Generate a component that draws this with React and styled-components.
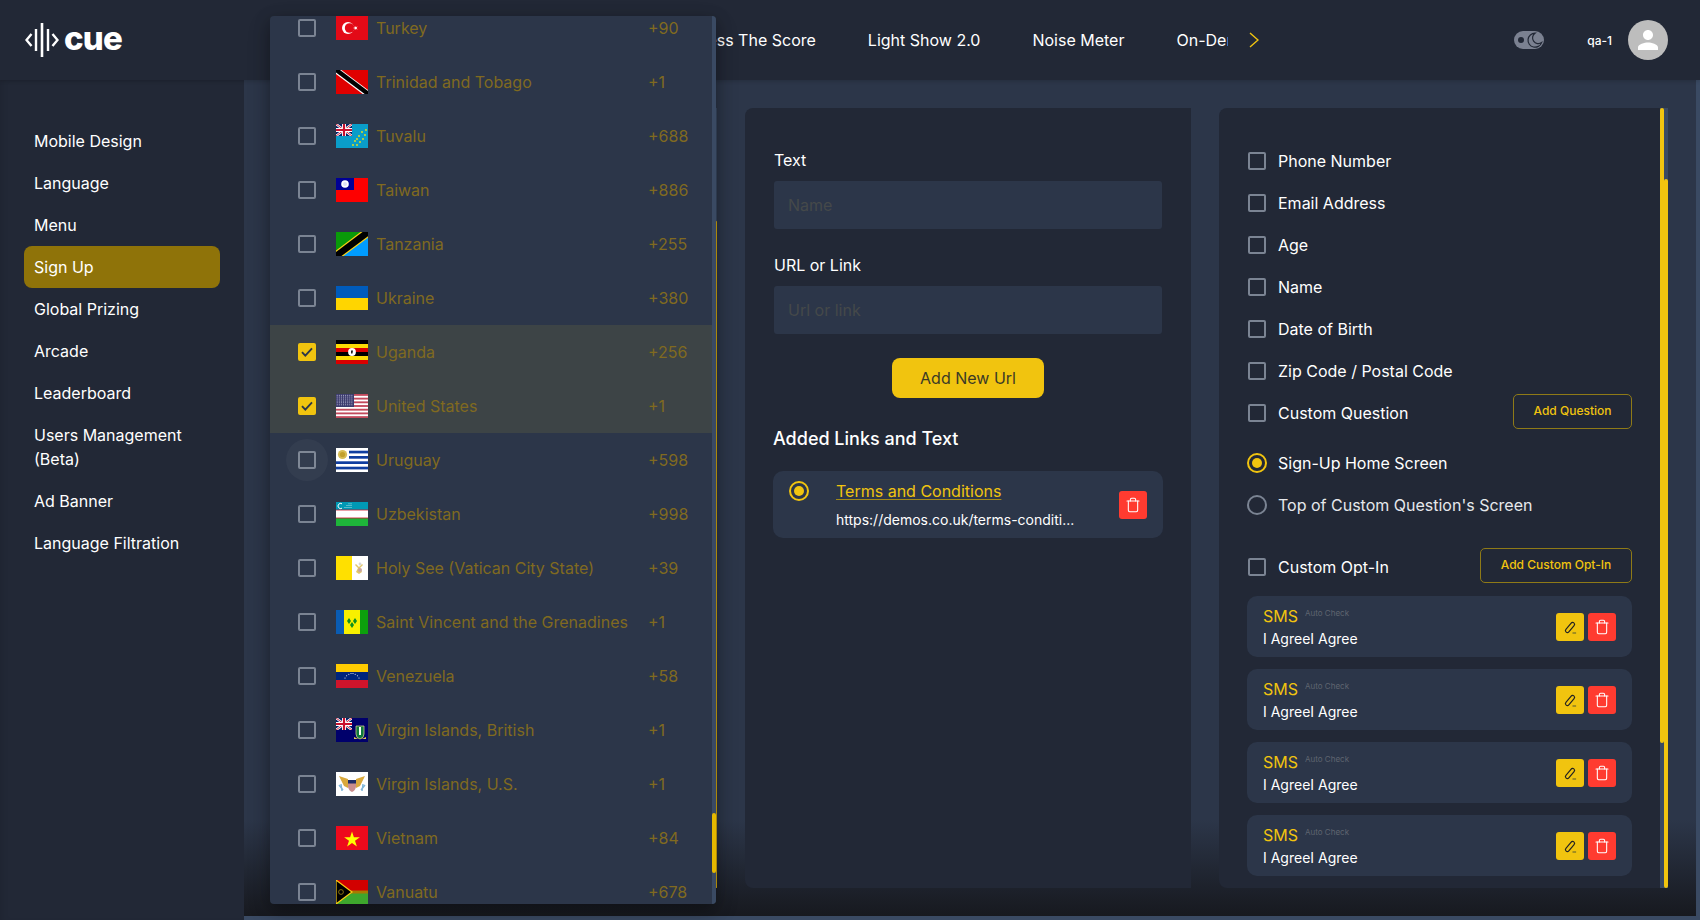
import React from "react";
import styled, { createGlobalStyle } from "styled-components";
import { Trash } from "lucide-react";

const GlobalStyle = createGlobalStyle`
  html, body {
    margin: 0;
    padding: 0;
    background: #222836;
    overflow: hidden;
  }
  * {
    box-sizing: border-box;
  }
`;

const GOLD = "#f1c40f";
const DARK = "#222836";
const SLATE = "#2c3649";
const TRACK = "#3a4a63";

const Page = styled.div`
  width: 1700px;
  height: 920px;
  position: relative;
  display: flex;
  flex-direction: column;
  font-family: Inter, "Noto Sans", sans-serif;
  color: #fff;
  overflow: hidden;
`;

/* top bar */
const TopBar = styled.header`
  height: 80px;
  flex: none;
  display: flex;
  align-items: center;
  background: ${DARK};
  box-shadow: 0 1px 4px rgba(0, 0, 0, 0.18);
  position: relative;
  z-index: 1;
`;

const Brand = styled.div`
  width: 686px;
  flex: none;
  padding-left: 25px;
  display: flex;
  align-items: center;
  gap: 5px;
`;

const BrandName = styled.span`
  font-size: 33px;
  font-weight: 800;
  letter-spacing: -0.8px;
  line-height: 40px;
  margin-top: -4px;
`;

const NavViewport = styled.nav`
  width: 542px;
  flex: none;
  display: flex;
  gap: 52px;
  overflow: hidden;
  white-space: nowrap;
`;

const NavLink = styled.span`
  font-size: 16px;
  line-height: 24px;
  flex: none;
`;

const NavNext = styled.svg`
  width: 10px;
  height: 16px;
  margin-left: 21px;
  flex: none;
`;

const TopRight = styled.div`
  margin-left: auto;
  padding-right: 32px;
  display: flex;
  align-items: center;
`;

const ThemeSwitch = styled.svg`
  width: 30px;
  height: 18px;
  margin-right: 43px;
`;

const UserName = styled.span`
  font-size: 12px;
  font-weight: 500;
  margin-right: 16px;
`;

const Avatar = styled.div`
  width: 40px;
  height: 40px;
  border-radius: 50%;
  background: #bdbdbd;
  display: flex;
  align-items: center;
  justify-content: center;
`;

/* body */
const Body = styled.div`
  flex: 1;
  display: flex;
  min-height: 0;
`;

const Sidebar = styled.aside`
  width: 244px;
  flex: none;
  background: ${DARK};
  padding: 40px 24px 0;
  display: flex;
  flex-direction: column;
  box-shadow: inset 6px 0 8px -6px rgba(0, 0, 0, 0.15);
`;

const SideItem = styled.div`
  width: 196px;
  padding: 9px 10px;
  font-size: 16px;
  line-height: 24px;
  border-radius: 8px;
  background: ${(p) => (p.$active ? "#8f7309" : "transparent")};
`;

const Main = styled.main`
  flex: 1;
  display: grid;
  grid-template-columns: 447px 446px 449px;
  gap: 28px;
  padding: 28px 0 28px 26px;
  border-right: 4px solid ${TRACK};
  border-bottom: 4px solid ${TRACK};
  background: linear-gradient(to bottom, ${SLATE} 0, ${SLATE} 740px, #17191f 836px);
`;

const Panel = styled.section`
  background: ${DARK};
  border-radius: 8px 0 0 8px;
  display: flex;
  min-height: 0;
`;

const PanelBody = styled.div`
  flex: 1;
  min-width: 0;
  padding: ${(p) => p.$padding};
`;

const ScrollTrack = styled.div`
  width: ${(p) => p.$width || 4}px;
  flex: none;
  background: ${TRACK};
`;

const ScrollThumb = styled.div`
  height: ${(p) => p.$height}px;
  margin-top: ${(p) => p.$top || 0}px;
  background: ${(p) => p.$color || GOLD};
  border-radius: 2px;
`;

/* country dropdown */
const CountryMenu = styled.div`
  position: absolute;
  left: 270px;
  top: 16px;
  width: 446px;
  height: 888px;
  display: flex;
  background: ${SLATE};
  border-radius: 4px;
  overflow: hidden;
  z-index: 2;
  box-shadow: 0 5px 16px rgba(0, 0, 0, 0.3), 0 8px 24px rgba(0, 0, 0, 0.16);
`;

const CountryList = styled.div`
  flex: 1;
  margin-top: -15px;
`;

const CountryRow = styled.div`
  height: 54px;
  display: flex;
  align-items: center;
  padding-left: 28px;
  background: ${(p) => (p.$selected ? "#3d4446" : "transparent")};
`;

const Check = styled.span`
  width: 18px;
  height: 18px;
  flex: none;
  position: relative;
  display: flex;
  align-items: center;
  justify-content: center;
  border-radius: 2px;
  border: ${(p) => (p.$checked ? "none" : "2px solid #7b8493")};
  background: ${(p) => (p.$checked ? GOLD : "transparent")};

  &::before {
    content: "";
    display: ${(p) => (p.$hover ? "block" : "none")};
    position: absolute;
    left: -14px;
    top: -14px;
    width: 42px;
    height: 42px;
    border-radius: 50%;
    background: rgba(255, 255, 255, 0.035);
  }
`;

const FlagSvg = styled.svg`
  width: 32px;
  height: 24px;
  flex: none;
  margin-left: 20px;
  display: block;
`;

const CountryName = styled.span`
  width: 272px;
  flex: none;
  margin-left: 8px;
  font-size: 16px;
  line-height: 24px;
  color: #806a20;
  white-space: nowrap;
`;

const CountryCode = styled.span`
  font-size: 16px;
  line-height: 24px;
  color: #806a20;
`;

/* link form */
const FieldLabel = styled.div`
  font-size: 16px;
  line-height: 24px;
  margin-top: ${(p) => p.$top || 0}px;
`;

const TextInput = styled.input`
  display: block;
  width: 388px;
  height: 48px;
  margin-top: 9px;
  padding: 0 14px;
  border: none;
  border-radius: 3px;
  outline: none;
  background: ${SLATE};
  color: #fff;
  font-family: inherit;
  font-size: 16px;

  &::placeholder {
    color: #45494a;
    opacity: 1;
  }
`;

const AddButton = styled.button`
  display: block;
  width: 152px;
  height: 40px;
  margin: 24px auto 0;
  border: none;
  border-radius: 8px;
  background: ${GOLD};
  color: #3b3a26;
  font-family: inherit;
  font-size: 16px;
`;

const SectionTitle = styled.h3`
  margin: 27px 0 18px -1px;
  font-size: 18px;
  font-weight: 500;
  line-height: 28px;
`;

const LinkCard = styled.div`
  width: 390px;
  height: 67px;
  margin-left: -1px;
  padding: 8px 16px;
  display: flex;
  align-items: flex-start;
  border-radius: 10px;
  background: ${SLATE};
`;

const Radio = styled.span`
  width: 20px;
  height: 20px;
  flex: none;
  display: flex;
  align-items: center;
  justify-content: center;
  border-radius: 50%;
  border: 2px solid ${(p) => (p.$on ? GOLD : "#7b8493")};
  margin-top: ${(p) => p.$top || 0}px;

  &::after {
    content: "";
    display: ${(p) => (p.$on ? "block" : "none")};
    width: 10px;
    height: 10px;
    border-radius: 50%;
    background: ${GOLD};
  }
`;

const LinkText = styled.div`
  margin-left: 27px;
  flex: 1;
  min-width: 0;
`;

const LinkTitle = styled.div`
  font-size: 16px;
  line-height: 24px;
  color: ${GOLD};
  text-decoration: underline;
  text-underline-offset: 2px;
  text-decoration-thickness: 1px;
  text-decoration-color: #a38a17;
`;

const LinkUrl = styled.div`
  margin-top: 7px;
  font-size: 14px;
  line-height: 20px;
`;

const IconButton = styled.button`
  width: 28px;
  height: 28px;
  flex: none;
  padding: 0;
  border: none;
  border-radius: 3px;
  display: flex;
  align-items: center;
  justify-content: center;
  background: ${(p) => (p.$kind === "edit" ? GOLD : "#ff3b30")};
  color: ${(p) => (p.$kind === "edit" ? "#222" : "#fff")};
  margin-top: ${(p) => p.$top || 0}px;
`;

/* sign-up fields */
const OptionRow = styled.div`
  height: 42px;
  display: flex;
  align-items: center;
  gap: 12px;
  margin-top: ${(p) => p.$top || 0}px;
`;

const RadioRow = styled(OptionRow)`
  gap: 11px;
  margin-left: -1px;
`;

const OptionLabel = styled.span`
  font-size: 16px;
  line-height: 24px;
  color: ${(p) => p.$color || "#fff"};
`;

const OutlineButton = styled.button`
  margin-left: auto;
  margin-bottom: 3px;
  width: ${(p) => p.$width}px;
  height: 35px;
  padding: 0 0 2px;
  border: 1px solid #8f7a17;
  border-radius: 5px;
  background: transparent;
  color: ${GOLD};
  font-family: inherit;
  font-size: 12px;
  font-weight: 500;
`;

const OptInCard = styled.div`
  height: 61px;
  margin: ${(p) => p.$top}px 0 0 -1px;
  padding: 8px 16px;
  display: flex;
  align-items: center;
  border-radius: 10px;
  background: ${SLATE};
`;

const OptInText = styled.div`
  flex: 1;
`;

const OptInHead = styled.div`
  display: flex;
  align-items: flex-start;
  gap: 7px;
`;

const OptInTitle = styled.span`
  font-size: 16px;
  line-height: 24px;
  color: ${GOLD};
`;

const AutoCheck = styled.span`
  font-size: 8px;
  line-height: 10px;
  margin-top: 4px;
  color: #5f6570;
`;

const OptInBody = styled.div`
  margin-top: 1px;
  font-size: 14px;
  line-height: 20px;
`;

const CardActions = styled.div`
  display: flex;
  gap: 4px;
`;

const UK = ({ w = 16, h = 12 }) => (
  <svg x="0" y="0" width={w} height={h} viewBox="0 0 16 12" preserveAspectRatio="none">
    <rect width="16" height="12" fill="#012169" />
    <path d="M0 0L16 12M16 0L0 12" stroke="#fff" strokeWidth="2.4" />
    <path d="M0 0L16 12M16 0L0 12" stroke="#c8102e" strokeWidth="0.9" />
    <path d="M8 0V12M0 6H16" stroke="#fff" strokeWidth="4" />
    <path d="M8 0V12M0 6H16" stroke="#c8102e" strokeWidth="2.2" />
  </svg>
);

const dots = (list, fill, r = 0.6) =>
  list.map(([x, y], i) => <circle key={i} cx={x} cy={y} r={r} fill={fill} />);

const usStars = [];
for (let y = 1.2; y < 12.5; y += 1.9) {
  for (let x = 1.2; x < 16.5; x += 2.1) usStars.push([x, y]);
}

const flags = {
  TR: (
    <>
      <rect width="32" height="24" fill="#e30a17" />
      <circle cx="12" cy="12" r="6" fill="#fff" />
      <circle cx="13.6" cy="12" r="4.8" fill="#e30a17" />
      <path d="M17 12l4.6-1.6-2.8 3.9v-4.6l2.8 3.9z" fill="#fff" />
    </>
  ),
  TT: (
    <>
      <rect width="32" height="24" fill="#e00000" />
      <path d="M0 0L32 24" stroke="#fff" strokeWidth="6.4" />
      <path d="M-1 -1L33 24.5" stroke="#000" strokeWidth="4.4" />
    </>
  ),
  TV: (
    <>
      <rect width="32" height="24" fill="#0a9dc9" />
      <UK />
      {dots(
        [[30, 6], [26, 8], [29, 11], [23, 12], [21, 15], [27, 15], [19, 17], [24, 18], [17, 21], [21, 21]],
        "#f5e20f",
        0.9,
      )}
    </>
  ),
  TW: (
    <>
      <rect width="32" height="24" fill="#fe0000" />
      <rect width="18" height="12" fill="#000095" />
      <circle cx="9" cy="6" r="3.8" fill="#fff" />
      <circle cx="9" cy="6" r="2" fill="#dfe0f5" />
    </>
  ),
  TZ: (
    <>
      <rect width="32" height="24" fill="#099a09" />
      <path d="M32 0V24H0z" fill="#009cff" />
      <path d="M0 24L32 0" stroke="#fcd116" strokeWidth="9" />
      <path d="M0 24L32 0" stroke="#000" strokeWidth="6.6" />
    </>
  ),
  UA: (
    <>
      <rect width="32" height="12" fill="#005bbb" />
      <rect y="12" width="32" height="12" fill="#ffd500" />
    </>
  ),
  UG: (
    <>
      {["#000", "#fcdc04", "#d90000", "#000", "#fcdc04", "#d90000"].map((c, i) => (
        <rect key={i} y={i * 4} width="32" height="4" fill={c} />
      ))}
      <circle cx="16" cy="12" r="3.9" fill="#fff" />
      <path d="M15 10.5l2 0-.5 3h-1.5z" fill="#222" />
    </>
  ),
  US: (
    <>
      <rect width="32" height="24" fill="#fff" />
      {[0, 1, 2, 3, 4, 5, 6].map((i) => (
        <rect key={i} y={(i * 24) / 6.5} width="32" height="1.85" fill="#c2495c" />
      ))}
      <rect width="18" height="13" fill="#3c3b6e" />
      {dots(usStars, "#c9cbe0", 0.5)}
    </>
  ),
  UY: (
    <>
      <rect width="32" height="24" fill="#fff" />
      {[2.7, 8, 13.3, 18.7].map((y) => (
        <rect key={y} y={y} x={y < 13 ? 13 : 0} width={y < 13 ? 19 : 32} height="2.7" fill="#0e3da0" />
      ))}
      <circle cx="6.5" cy="6.5" r="4.6" fill="#d8bd55" />
      <circle cx="6.5" cy="6.5" r="2.6" fill="#c2a02c" />
    </>
  ),
  UZ: (
    <>
      <rect width="32" height="8" fill="#0099b5" />
      <rect y="8" width="32" height="8" fill="#fff" />
      <rect y="16" width="32" height="8" fill="#1eb53a" />
      <rect y="7.6" width="32" height="0.8" fill="#ce1126" />
      <rect y="15.6" width="32" height="0.8" fill="#ce1126" />
      <path d="M6 1.8a2.6 2.6 0 1 0 0 4.4" stroke="#fff" strokeWidth="1" fill="none" />
      {dots([[9, 5.6], [11, 5.6], [13, 5.6], [15, 5.6], [11, 3.6], [13, 3.6], [15, 3.6], [13, 1.8], [15, 1.8]], "#dff3f6", 0.5)}
    </>
  ),
  VA: (
    <>
      <rect width="16" height="24" fill="#ffe000" />
      <rect x="16" width="16" height="24" fill="#fff" />
      <path d="M20 8l3 3 3-3 1 1-3 3 2 4-3 2-3-2 2-4-3-3z" fill="#e2c66a" />
      <circle cx="24" cy="14" r="2" fill="#c9a6a0" />
      <circle cx="24" cy="8" r="1.4" fill="#d7d7d7" />
    </>
  ),
  VC: (
    <>
      <rect width="8" height="24" fill="#0a5cb3" />
      <rect x="8" width="16" height="24" fill="#f8f000" />
      <rect x="24" width="8" height="24" fill="#0c9f0c" />
      <path d="M13 8l2 3-2 3-2-3zM19 8l2 3-2 3-2-3zM16 12l2 3-2 3-2-3z" fill="#0c8f1c" />
    </>
  ),
  VE: (
    <>
      <rect width="32" height="8" fill="#ffcc00" />
      <rect y="8" width="32" height="8" fill="#00247d" />
      <rect y="16" width="32" height="8" fill="#cf142b" />
      {dots([[9, 14], [10.6, 11.8], [12.8, 10.2], [15, 9.5], [17, 9.5], [19.2, 10.2], [21.4, 11.8], [23, 14]], "#fff", 0.55)}
    </>
  ),
  VG: (
    <>
      <rect width="32" height="24" fill="#00006b" />
      <UK />
      <path d="M20 8h8v8q0 4-4 5-4-1-4-5z" fill="#0f7a3c" stroke="#e6d98a" strokeWidth="0.7" />
      <rect x="23" y="9" width="2" height="8" fill="#fff" />
      <path d="M18 19q6 4 12 0v2h-12z" fill="#e6c65a" />
    </>
  ),
  VI: (
    <>
      <rect width="32" height="24" fill="#fff" />
      <path d="M3 4l9 3v9l-4-2zM29 4l-9 3v9l4-2z" fill="#d9a93c" />
      <path d="M12 8h8v7q-1 4-4 5-3-1-4-5z" fill="#c98d8d" />
      <rect x="12" y="8" width="8" height="3.5" fill="#1f2d66" />
      <path d="M3 13l4 5M5 12l1 7M29 13l-4 5M27 12l-1 7" stroke="#7fb6d8" strokeWidth="1.4" />
    </>
  ),
  VN: (
    <>
      <rect width="32" height="24" fill="#ee0a1c" />
      <path d="M16 5.6l1.9 5.7h6l-4.9 3.5 1.9 5.7-4.9-3.5-4.9 3.5 1.9-5.7-4.9-3.5h6z" fill="#ff0" />
    </>
  ),
  VU: (
    <>
      <rect width="32" height="12" fill="#d20000" />
      <rect y="12" width="32" height="12" fill="#3ea72d" />
      <rect y="10.5" width="32" height="3" fill="#a77b00" />
      <path d="M0 0L16 12L0 24z" fill="#000" stroke="#fdce12" strokeWidth="1.2" />
      <circle cx="5" cy="12" r="2.4" fill="none" stroke="#a38a17" strokeWidth="0.8" />
    </>
  ),
};

const Flag = ({ code }) => <FlagSvg viewBox="0 0 32 24">{flags[code]}</FlagSvg>;

const CheckMark = () => (
  <svg width="12" height="10" viewBox="0 0 12 10">
    <path d="M1 5.2L4.3 8.6L11 1.4" fill="none" stroke="#2c3649" strokeWidth="1.9" />
  </svg>
);

const PenIcon = () => (
  <svg width="16" height="16" viewBox="0 0 16 16" fill="none" stroke="#222" strokeWidth="1.2">
    <rect x="6.1" y="2.5" width="3.8" height="12" rx="1.9" transform="rotate(40 8 8.5)" />
    <path d="M10.5 14h3.6" stroke="#6e6a2a" />
  </svg>
);

const countries = [
  { code: "TR", name: "Turkey", dial: "+90" },
  { code: "TT", name: "Trinidad and Tobago", dial: "+1" },
  { code: "TV", name: "Tuvalu", dial: "+688" },
  { code: "TW", name: "Taiwan", dial: "+886" },
  { code: "TZ", name: "Tanzania", dial: "+255" },
  { code: "UA", name: "Ukraine", dial: "+380" },
  { code: "UG", name: "Uganda", dial: "+256", checked: true },
  { code: "US", name: "United States", dial: "+1", checked: true },
  { code: "UY", name: "Uruguay", dial: "+598", hover: true },
  { code: "UZ", name: "Uzbekistan", dial: "+998" },
  { code: "VA", name: "Holy See (Vatican City State)", dial: "+39" },
  { code: "VC", name: "Saint Vincent and the Grenadines", dial: "+1" },
  { code: "VE", name: "Venezuela", dial: "+58" },
  { code: "VG", name: "Virgin Islands, British", dial: "+1" },
  { code: "VI", name: "Virgin Islands, U.S.", dial: "+1" },
  { code: "VN", name: "Vietnam", dial: "+84" },
  { code: "VU", name: "Vanuatu", dial: "+678" },
];

const menu = [
  "Mobile Design",
  "Language",
  "Menu",
  "Sign Up",
  "Global Prizing",
  "Arcade",
  "Leaderboard",
  "Users Management (Beta)",
  "Ad Banner",
  "Language Filtration",
];

const fields = ["Phone Number", "Email Address", "Age", "Name", "Date of Birth", "Zip Code / Postal Code"];

export default function App() {
  return (
    <Page>
      <GlobalStyle />
      <TopBar>
        <Brand>
          <svg width="34" height="36" viewBox="0 0 34 36" fill="none" stroke="#fff">
            <path d="M6.5 12L1.5 18L6.5 24" strokeWidth="2.4" />
            <path d="M11 7V29" strokeWidth="2.4" />
            <path d="M17 1V35" strokeWidth="2.6" />
            <path d="M23 7V29" strokeWidth="2.4" />
            <path d="M27.5 12L32.5 18L27.5 24" strokeWidth="2.4" />
          </svg>
          <BrandName>cue</BrandName>
        </Brand>
        <NavViewport>
          <NavLink>Guess The Score</NavLink>
          <NavLink>Light Show 2.0</NavLink>
          <NavLink>Noise Meter</NavLink>
          <NavLink>On-Demand</NavLink>
        </NavViewport>
        <NavNext viewBox="0 0 10 16" fill="none" stroke={GOLD} strokeWidth="1.4">
          <path d="M1 1L9 8L1 15" />
        </NavNext>
        <TopRight>
          <ThemeSwitch viewBox="0 0 30 18">
            <rect width="30" height="18" rx="9" fill="#7b8191" />
            <circle cx="7" cy="9" r="3" fill="#222836" />
            <path
              d="M21 2.2a7 7 0 1 0 6.6 9.4a5.6 5.6 0 0 1-6.6-9.4z"
              fill="none"
              stroke="#222836"
              strokeWidth="1.2"
            />
          </ThemeSwitch>
          <UserName>qa-1</UserName>
          <Avatar>
            <svg width="30" height="30" viewBox="0 0 24 24" fill="#fff">
              <path d="M12 12c2.21 0 4-1.79 4-4s-1.79-4-4-4-4 1.79-4 4 1.79 4 4 4zm0 2c-2.67 0-8 1.34-8 4v2h16v-2c0-2.66-5.33-4-8-4z" />
            </svg>
          </Avatar>
        </TopRight>
      </TopBar>

      <Body>
        <Sidebar>
          {menu.map((item) => (
            <SideItem key={item} $active={item === "Sign Up"}>
              {item}
            </SideItem>
          ))}
        </Sidebar>

        <Main>
          <Panel>
            <PanelBody />
            <ScrollTrack $width={1}>
              <ScrollThumb $top={113} $height={667} $color="#d9ac0c" />
            </ScrollTrack>
          </Panel>

          <Panel>
            <PanelBody $padding="40px 29px 0">
              <FieldLabel>Text</FieldLabel>
              <TextInput placeholder="Name" />
              <FieldLabel $top={24}>URL or Link</FieldLabel>
              <TextInput placeholder="Url or link" />
              <AddButton>Add New Url</AddButton>
              <SectionTitle>Added Links and Text</SectionTitle>
              <LinkCard>
                <Radio $on $top={2} />
                <LinkText>
                  <LinkTitle>Terms and Conditions</LinkTitle>
                  <LinkUrl>https://demos.co.uk/terms-conditi...</LinkUrl>
                </LinkText>
                <IconButton $top={12}>
                  <Trash size={16} strokeWidth={1.6} />
                </IconButton>
              </LinkCard>
            </PanelBody>
          </Panel>

          <Panel>
            <PanelBody $padding="32px 28px 0 29px">
              {fields.map((field) => (
                <OptionRow key={field}>
                  <Check />
                  <OptionLabel>{field}</OptionLabel>
                </OptionRow>
              ))}
              <OptionRow>
                <Check />
                <OptionLabel>Custom Question</OptionLabel>
                <OutlineButton $width={119}>Add Question</OutlineButton>
              </OptionRow>
              <RadioRow $top={8}>
                <Radio $on />
                <OptionLabel>Sign-Up Home Screen</OptionLabel>
              </RadioRow>
              <RadioRow>
                <Radio />
                <OptionLabel $color="#e6e8ec">Top of Custom Question's Screen</OptionLabel>
              </RadioRow>
              <OptionRow $top={20}>
                <Check />
                <OptionLabel>Custom Opt-In</OptionLabel>
                <OutlineButton $width={152}>Add Custom Opt-In</OutlineButton>
              </OptionRow>
              {[8, 12, 12, 12].map((top, i) => (
                <OptInCard key={i} $top={top}>
                  <OptInText>
                    <OptInHead>
                      <OptInTitle>SMS</OptInTitle>
                      <AutoCheck>Auto Check</AutoCheck>
                    </OptInHead>
                    <OptInBody>I AgreeI Agree</OptInBody>
                  </OptInText>
                  <CardActions>
                    <IconButton $kind="edit">
                      <PenIcon />
                    </IconButton>
                    <IconButton>
                      <Trash size={16} strokeWidth={1.6} />
                    </IconButton>
                  </CardActions>
                </OptInCard>
              ))}
            </PanelBody>
            <ScrollTrack>
              <ScrollThumb $height={635} />
            </ScrollTrack>
            <ScrollTrack>
              <ScrollThumb $top={71} $height={709} />
            </ScrollTrack>
          </Panel>
        </Main>
      </Body>

      <CountryMenu>
        <CountryList>
          {countries.map((c) => (
            <CountryRow key={c.code} $selected={c.checked}>
              <Check $checked={c.checked} $hover={c.hover}>
                {c.checked && <CheckMark />}
              </Check>
              <Flag code={c.code} />
              <CountryName>{c.name}</CountryName>
              <CountryCode>{c.dial}</CountryCode>
            </CountryRow>
          ))}
        </CountryList>
        <ScrollTrack>
          <ScrollThumb $top={797} $height={60} $color="#e6b800" />
        </ScrollTrack>
      </CountryMenu>
    </Page>
  );
}
